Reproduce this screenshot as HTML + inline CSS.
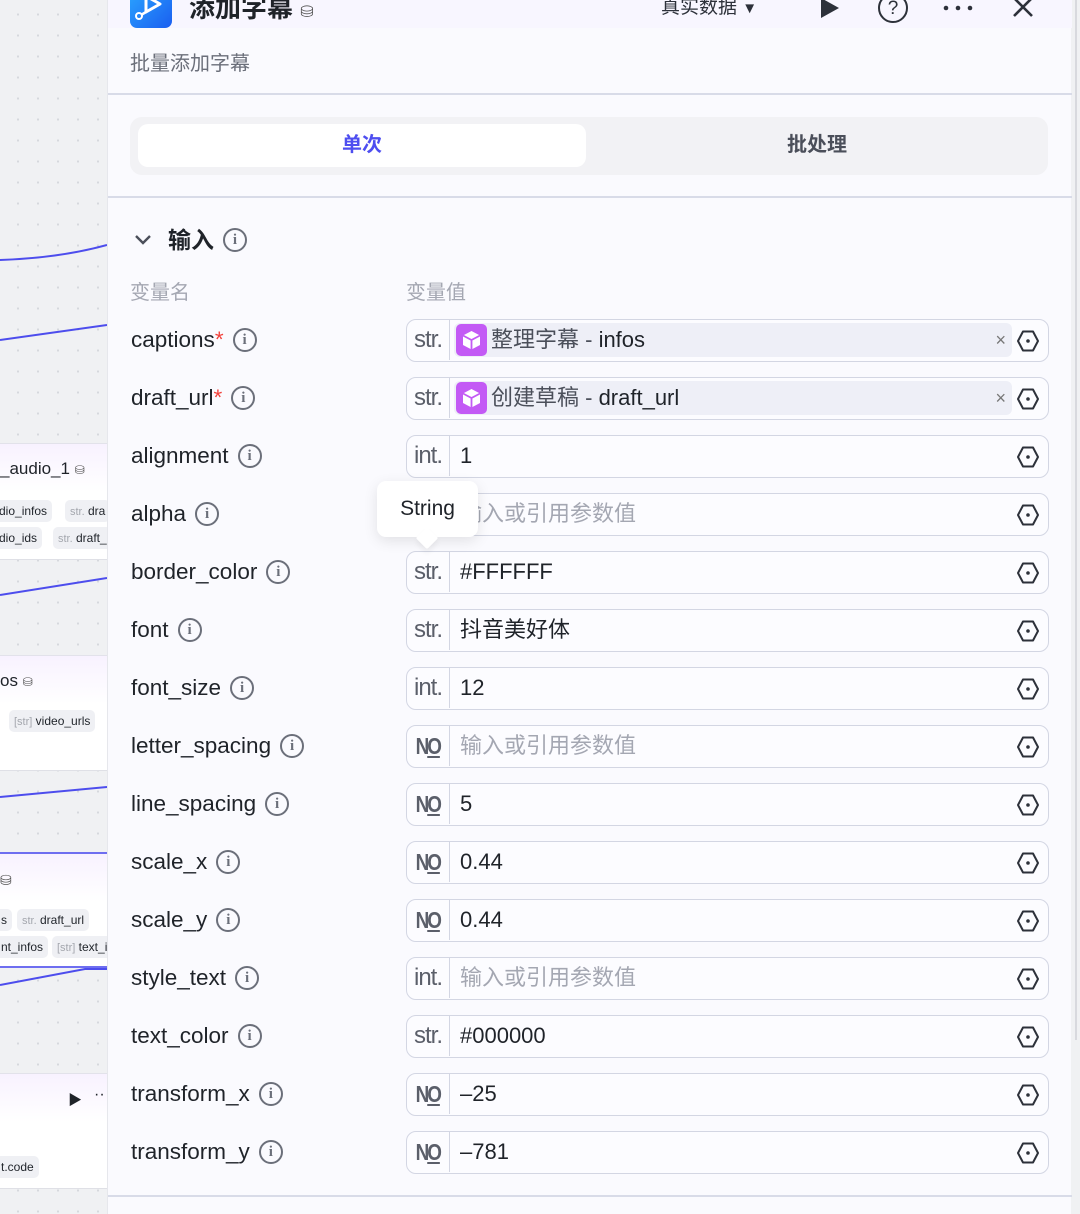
<!DOCTYPE html>
<html><head><meta charset="utf-8">
<style>
*{margin:0;padding:0;box-sizing:border-box}
body{width:1080px;height:1214px;overflow:hidden;position:relative;background:#f0f1f3;font-family:"Liberation Sans","Noto Sans CJK SC",sans-serif;color:#1f2329}
.canvas{position:absolute;left:0;top:0;width:107px;height:1214px;background-color:#f0f1f3;background-image:radial-gradient(#d6d8dd 1px,transparent 1.2px);background-size:20px 21px;background-position:8px 4px}
.card{position:absolute;left:0;width:107px;background:#fff;border-top:1px solid #e2e2ea;border-bottom:1px solid #dfe0e6}
.card .hd{height:48px;background:linear-gradient(#f8f2ff,#fff)}
.chip{position:absolute;background:#eff0f4;border-radius:5px;font-size:12px;height:22px;line-height:22px;padding:0 5px;color:#1f2329;white-space:nowrap}
.chip i{font-style:normal;color:#a4a7ae;font-size:11px}
.panel{position:absolute;left:107px;top:0;width:964px;height:1214px;background:#fafafe;border-left:1px solid #e6e7ec}
.topbar{position:absolute;left:0;top:0;width:964px;height:28px;background:#f8f6ff}
.abs{position:absolute;white-space:nowrap}
.lbl{position:absolute;left:23px;font-size:22.5px;color:#1f2329;line-height:28px;white-space:nowrap;display:flex;align-items:center}
.lbl .req{color:#f2413b}
.info{display:inline-block;width:24px;height:24px;border:2px solid #6b6f7a;border-radius:50%;text-align:center;font:bold 15px/20px "Liberation Serif",serif;color:#6b6f7a;margin-left:9px}
.box{position:absolute;left:298px;width:643px;height:43px;border:1.5px solid #d3d6e3;border-radius:10px;background:#fcfcff}
.ty{position:absolute;left:0;top:0;width:43px;height:40px;border-right:1.5px solid #d3d6e3;text-align:center;font-size:24px;line-height:40px;color:#5b5f6a;letter-spacing:-1px}
.ty.no{font-size:23px;letter-spacing:-2.5px;font-weight:bold;color:#5b5f6a}
.ty.no span{display:inline-block;transform:scaleX(.82)}
.val{position:absolute;left:53px;top:0;line-height:40px;font-size:22px;color:#1f2329}
.ph{color:#a4a7b2}
.ref{position:absolute;left:47px;top:3px;width:558px;height:34px;background:#eeeff7;border-radius:6px}
.cube{position:absolute;left:2px;top:1px;width:31px;height:32px;background:#c35af5;border-radius:5px}
.ref .t{position:absolute;left:37px;top:0;line-height:34px;font-size:22px;color:#1f2329}
.ref .t b{font-weight:normal;color:#4b4f5a}
.ref .x{position:absolute;right:6px;top:0;line-height:34px;font-size:18px;color:#777}
.hex{position:absolute;right:8px;top:9px}
</style></head><body>
<div class="canvas">
  <svg style="position:absolute;left:0;top:0" width="107" height="1214">
    <path d="M0 260 Q60 258 107 245" stroke="#4d4ded" stroke-width="2" fill="none"/>
    <path d="M0 340 L107 325" stroke="#4d4ded" stroke-width="2" fill="none"/>
    <path d="M0 595 L107 578" stroke="#4d4ded" stroke-width="2" fill="none"/>
    <path d="M0 797 L107 787" stroke="#4d4ded" stroke-width="2" fill="none"/>
    <path d="M0 985 L85 969 L107 969" stroke="#4d4ded" stroke-width="2" fill="none"/>
  </svg>
  <div class="card" style="top:443px;height:117px"><div class="hd"></div>
    <div class="abs" style="left:0;top:15px;font-size:17px">_audio_1 <span style="font-size:12px;color:#555">⛁</span></div>
    <div class="chip" style="left:-6px;top:56px">dio_infos</div>
    <div class="chip" style="left:65px;top:56px"><i>str.</i> dra</div>
    <div class="chip" style="left:-6px;top:83px">dio_ids</div>
    <div class="chip" style="left:53px;top:83px"><i>str.</i> draft_</div>
  </div>
  <div class="card" style="top:655px;height:116px"><div class="hd"></div>
    <div class="abs" style="left:0;top:15px;font-size:17px">os <span style="font-size:12px;color:#555">⛁</span></div>
    <div class="chip" style="left:9px;top:54px"><i>[str]</i> video_urls</div>
  </div>
  <div class="card" style="top:852px;height:116px;border-top:2px solid #6e6ef0;border-bottom:2px solid #6e6ef0"><div class="hd"></div>
    <div class="abs" style="left:0;top:18px;font-size:14px;color:#555">⛁</div>
    <div class="chip" style="left:-4px;top:55px">s</div>
    <div class="chip" style="left:17px;top:55px"><i>str.</i> draft_url</div>
    <div class="chip" style="left:-4px;top:82px">nt_infos</div>
    <div class="chip" style="left:52px;top:82px"><i>[str]</i> text_i</div>
  </div>
  <div class="card" style="top:1073px;height:116px"><div class="hd"></div>
    <div class="abs" style="left:68px;top:16px;font-size:14px">▶</div>
    <div class="abs" style="left:94px;top:12px;font-size:16px">··</div>
    <div class="chip" style="left:-4px;top:82px">t.code</div>
  </div>
</div>
<div style="position:absolute;left:1075px;top:0;width:2px;height:1040px;background:#d8d9de"></div>
<div class="panel">
  <div class="topbar"></div>
  <div class="abs" style="left:22px;top:-10px;width:42px;height:38px;border-radius:7px;background:linear-gradient(135deg,#2aa4ff,#1a5ef0)">
    <svg width="42" height="38"><path d="M16 6 L30 14 L16 22 Z" fill="none" stroke="#fff" stroke-width="3" stroke-linejoin="round"/><path d="M16 22 L11 25" stroke="#fff" stroke-width="2.5"/><circle cx="9" cy="26" r="3" fill="none" stroke="#fff" stroke-width="2"/></svg>
  </div>
  <div class="abs" style="left:81px;top:-8px;font-size:26px;font-weight:bold;color:#1f2329;line-height:32px">添加字幕 <span style="font-size:16px;color:#555;font-weight:normal">⛁</span></div>
  <div class="abs" style="left:553px;top:-6px;font-size:19px;color:#2d313a;line-height:28px">真实数据 <span style="font-size:15px">▼</span></div>
  <svg class="abs" style="left:710px;top:-2px" width="24" height="22"><path d="M3 0 L21 10 L3 20 Z" fill="#2d313a"/></svg>
  <div class="abs" style="left:770px;top:-7px;width:30px;height:30px;border:2px solid #2d313a;border-radius:50%;text-align:center;font-size:19px;line-height:27px;color:#2d313a">?</div>
  <svg class="abs" style="left:834px;top:4px" width="32" height="8"><circle cx="4" cy="4" r="2.3" fill="#2d313a"/><circle cx="16" cy="4" r="2.3" fill="#2d313a"/><circle cx="28" cy="4" r="2.3" fill="#2d313a"/></svg>
  <svg class="abs" style="left:903px;top:-2px" width="24" height="22"><path d="M3 0 L21 18 M21 0 L3 18" stroke="#2d313a" stroke-width="2.6"/></svg>
  <div class="abs" style="left:22px;top:47px;font-size:20px;color:#6b6f7a">批量添加字幕</div>
  <div class="abs" style="left:0;top:93px;width:964px;height:2px;background:#d8dbe8"></div>
  <div class="abs" style="left:22px;top:117px;width:918px;height:58px;background:#f2f2f5;border-radius:12px"></div>
  <div class="abs" style="left:30px;top:124px;width:448px;height:43px;background:#fff;border-radius:10px;text-align:center;line-height:43px;font-size:20px;font-weight:bold;color:#4e4ef0">单次</div>
  <div class="abs" style="left:478px;top:124px;width:462px;height:43px;text-align:center;line-height:43px;font-size:20px;font-weight:bold;color:#4b4f5a">批处理</div>
  <div class="abs" style="left:0;top:196px;width:964px;height:2px;background:#d8dbe8"></div>
  <div class="abs" style="left:25px;top:230px"><svg width="20" height="20"><path d="M3 6 L10 13 L17 6" stroke="#4b4f5a" stroke-width="2.4" fill="none"/></svg></div>
  <div class="lbl" style="left:60px;top:226px;font-size:23px;font-weight:bold">输入<span class="info">i</span></div>
  <div class="abs" style="left:22px;top:276px;font-size:20px;color:#a4a7b2">变量名</div>
  <div class="abs" style="left:298px;top:276px;font-size:20px;color:#a4a7b2">变量值</div>

  <div class="lbl" style="top:326px">captions<span class="req">*</span><span class="info">i</span></div>
  <div class="box" style="top:319px"><div class="ty">str.</div><div class="ref"><div class="cube"><svg width="31" height="32"><path d="M15.5 7 L24 11.5 L24 21 L15.5 25.5 L7 21 L7 11.5 Z" fill="#fff"/><path d="M7 11.5 L15.5 16 L24 11.5 M15.5 16 L15.5 25.5" stroke="#c35af5" stroke-width="1.8" fill="none"/></svg></div><div class="t"><b>整理字幕 - </b>infos</div><div class="x">×</div></div><svg class="hex" width="24" height="24"><path d="M7 2.5 L17 2.5 L22 12 L17 21.5 L7 21.5 L2 12 Z" fill="none" stroke="#2d313a" stroke-width="2" stroke-linejoin="round"/><circle cx="12" cy="12" r="1.8" fill="#2d313a"/></svg></div>

  <div class="lbl" style="top:384px">draft_url<span class="req">*</span><span class="info">i</span></div>
  <div class="box" style="top:377px"><div class="ty">str.</div><div class="ref"><div class="cube"><svg width="31" height="32"><path d="M15.5 7 L24 11.5 L24 21 L15.5 25.5 L7 21 L7 11.5 Z" fill="#fff"/><path d="M7 11.5 L15.5 16 L24 11.5 M15.5 16 L15.5 25.5" stroke="#c35af5" stroke-width="1.8" fill="none"/></svg></div><div class="t"><b>创建草稿 - </b>draft_url</div><div class="x">×</div></div><svg class="hex" width="24" height="24"><path d="M7 2.5 L17 2.5 L22 12 L17 21.5 L7 21.5 L2 12 Z" fill="none" stroke="#2d313a" stroke-width="2" stroke-linejoin="round"/><circle cx="12" cy="12" r="1.8" fill="#2d313a"/></svg></div>

  <div class="lbl" style="top:442px">alignment<span class="info">i</span></div>
  <div class="box" style="top:435px"><div class="ty">int.</div><div class="val">1</div><svg class="hex" width="24" height="24"><path d="M7 2.5 L17 2.5 L22 12 L17 21.5 L7 21.5 L2 12 Z" fill="none" stroke="#2d313a" stroke-width="2" stroke-linejoin="round"/><circle cx="12" cy="12" r="1.8" fill="#2d313a"/></svg></div>

  <div class="lbl" style="top:500px">alpha<span class="info">i</span></div>
  <div class="box" style="top:493px"><div class="ty">str.</div><div class="val ph">输入或引用参数值</div><svg class="hex" width="24" height="24"><path d="M7 2.5 L17 2.5 L22 12 L17 21.5 L7 21.5 L2 12 Z" fill="none" stroke="#2d313a" stroke-width="2" stroke-linejoin="round"/><circle cx="12" cy="12" r="1.8" fill="#2d313a"/></svg></div>

  <div class="lbl" style="top:558px">border_color<span class="info">i</span></div>
  <div class="box" style="top:551px"><div class="ty">str.</div><div class="val">#FFFFFF</div><svg class="hex" width="24" height="24"><path d="M7 2.5 L17 2.5 L22 12 L17 21.5 L7 21.5 L2 12 Z" fill="none" stroke="#2d313a" stroke-width="2" stroke-linejoin="round"/><circle cx="12" cy="12" r="1.8" fill="#2d313a"/></svg></div>

  <div class="lbl" style="top:616px">font<span class="info">i</span></div>
  <div class="box" style="top:609px"><div class="ty">str.</div><div class="val">抖音美好体</div><svg class="hex" width="24" height="24"><path d="M7 2.5 L17 2.5 L22 12 L17 21.5 L7 21.5 L2 12 Z" fill="none" stroke="#2d313a" stroke-width="2" stroke-linejoin="round"/><circle cx="12" cy="12" r="1.8" fill="#2d313a"/></svg></div>

  <div class="lbl" style="top:674px">font_size<span class="info">i</span></div>
  <div class="box" style="top:667px"><div class="ty">int.</div><div class="val">12</div><svg class="hex" width="24" height="24"><path d="M7 2.5 L17 2.5 L22 12 L17 21.5 L7 21.5 L2 12 Z" fill="none" stroke="#2d313a" stroke-width="2" stroke-linejoin="round"/><circle cx="12" cy="12" r="1.8" fill="#2d313a"/></svg></div>

  <div class="lbl" style="top:732px">letter_spacing<span class="info">i</span></div>
  <div class="box" style="top:725px"><div class="ty no"><span>N<u>O</u></span></div><div class="val ph">输入或引用参数值</div><svg class="hex" width="24" height="24"><path d="M7 2.5 L17 2.5 L22 12 L17 21.5 L7 21.5 L2 12 Z" fill="none" stroke="#2d313a" stroke-width="2" stroke-linejoin="round"/><circle cx="12" cy="12" r="1.8" fill="#2d313a"/></svg></div>

  <div class="lbl" style="top:790px">line_spacing<span class="info">i</span></div>
  <div class="box" style="top:783px"><div class="ty no"><span>N<u>O</u></span></div><div class="val">5</div><svg class="hex" width="24" height="24"><path d="M7 2.5 L17 2.5 L22 12 L17 21.5 L7 21.5 L2 12 Z" fill="none" stroke="#2d313a" stroke-width="2" stroke-linejoin="round"/><circle cx="12" cy="12" r="1.8" fill="#2d313a"/></svg></div>

  <div class="lbl" style="top:848px">scale_x<span class="info">i</span></div>
  <div class="box" style="top:841px"><div class="ty no"><span>N<u>O</u></span></div><div class="val">0.44</div><svg class="hex" width="24" height="24"><path d="M7 2.5 L17 2.5 L22 12 L17 21.5 L7 21.5 L2 12 Z" fill="none" stroke="#2d313a" stroke-width="2" stroke-linejoin="round"/><circle cx="12" cy="12" r="1.8" fill="#2d313a"/></svg></div>

  <div class="lbl" style="top:906px">scale_y<span class="info">i</span></div>
  <div class="box" style="top:899px"><div class="ty no"><span>N<u>O</u></span></div><div class="val">0.44</div><svg class="hex" width="24" height="24"><path d="M7 2.5 L17 2.5 L22 12 L17 21.5 L7 21.5 L2 12 Z" fill="none" stroke="#2d313a" stroke-width="2" stroke-linejoin="round"/><circle cx="12" cy="12" r="1.8" fill="#2d313a"/></svg></div>

  <div class="lbl" style="top:964px">style_text<span class="info">i</span></div>
  <div class="box" style="top:957px"><div class="ty">int.</div><div class="val ph">输入或引用参数值</div><svg class="hex" width="24" height="24"><path d="M7 2.5 L17 2.5 L22 12 L17 21.5 L7 21.5 L2 12 Z" fill="none" stroke="#2d313a" stroke-width="2" stroke-linejoin="round"/><circle cx="12" cy="12" r="1.8" fill="#2d313a"/></svg></div>

  <div class="lbl" style="top:1022px">text_color<span class="info">i</span></div>
  <div class="box" style="top:1015px"><div class="ty">str.</div><div class="val">#000000</div><svg class="hex" width="24" height="24"><path d="M7 2.5 L17 2.5 L22 12 L17 21.5 L7 21.5 L2 12 Z" fill="none" stroke="#2d313a" stroke-width="2" stroke-linejoin="round"/><circle cx="12" cy="12" r="1.8" fill="#2d313a"/></svg></div>

  <div class="lbl" style="top:1080px">transform_x<span class="info">i</span></div>
  <div class="box" style="top:1073px"><div class="ty no"><span>N<u>O</u></span></div><div class="val">–25</div><svg class="hex" width="24" height="24"><path d="M7 2.5 L17 2.5 L22 12 L17 21.5 L7 21.5 L2 12 Z" fill="none" stroke="#2d313a" stroke-width="2" stroke-linejoin="round"/><circle cx="12" cy="12" r="1.8" fill="#2d313a"/></svg></div>

  <div class="lbl" style="top:1138px">transform_y<span class="info">i</span></div>
  <div class="box" style="top:1131px"><div class="ty no"><span>N<u>O</u></span></div><div class="val">–781</div><svg class="hex" width="24" height="24"><path d="M7 2.5 L17 2.5 L22 12 L17 21.5 L7 21.5 L2 12 Z" fill="none" stroke="#2d313a" stroke-width="2" stroke-linejoin="round"/><circle cx="12" cy="12" r="1.8" fill="#2d313a"/></svg></div>

  <div class="abs" style="left:0;top:1195px;width:964px;height:2px;background:#d8dbe8"></div>

  <div class="abs" style="left:269px;top:481px;width:101px;height:56px;background:#fff;border-radius:9px;box-shadow:0 4px 14px rgba(0,0,0,.1);text-align:center;line-height:56px;font-size:21px;color:#1f2329">String</div>
  <div class="abs" style="left:311px;top:530px;width:16px;height:16px;background:#fff;transform:rotate(45deg);border-radius:2px;box-shadow:3px 3px 6px rgba(0,0,0,.06)"></div>
</div>
</body></html>
